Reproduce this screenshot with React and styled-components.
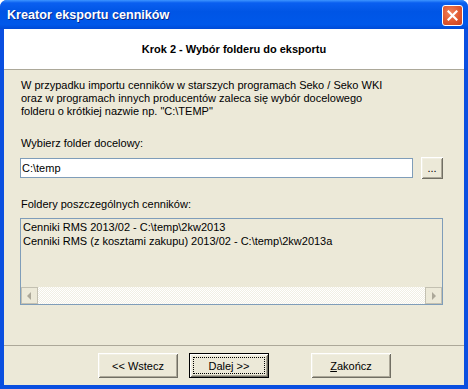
import React from 'react';
import styled, { createGlobalStyle } from 'styled-components';

const Global = createGlobalStyle`
  body {
    margin: 0;
    background: #ffffff;
  }
  #root {
    width: 468px;
    height: 389px;
  }
`;

const Window = styled.div`
  width: 468px;
  height: 389px;
  display: flex;
  flex-direction: column;
  background: #0a4fe0;
  border-radius: 7px 7px 0 0;
  overflow: hidden;
  font-family: Tahoma, "Liberation Sans", "DejaVu Sans", sans-serif;
  font-size: 11px;
  color: #000;
`;

const TitleBar = styled.div`
  height: 29px;
  flex: none;
  display: flex;
  align-items: center;
  justify-content: space-between;
  padding: 0 5px 0 7px;
  background: linear-gradient(
    180deg,
    #3d95ff 0%,
    #0a5ff0 10%,
    #0055e5 40%,
    #0058ea 85%,
    #004ad6 100%
  );
`;

const Title = styled.span`
  color: #ffffff;
  font-family: "Liberation Sans", Arial, sans-serif;
  font-weight: bold;
  font-size: 12.6px;
  text-shadow: 1px 1px 0 #0a2a8a;
  margin-top: 1px;
`;

const CloseButton = styled.div`
  width: 21px;
  height: 21px;
  box-sizing: border-box;
  border: 1px solid #ffffff;
  border-radius: 3px;
  background: radial-gradient(circle at 40% 35%, #f0835d 0%, #e0582f 55%, #c9401f 100%);
  display: flex;
  align-items: center;
  justify-content: center;
  margin-top: 1px;
`;

const Client = styled.div`
  flex: 1;
  margin: 0 4px 4px;
  background: #ece9d8;
  display: flex;
  flex-direction: column;
`;

const Header = styled.div`
  height: 40px;
  flex: none;
  background: #ffffff;
  border-bottom: 1px solid #aca899;
  display: flex;
  align-items: center;
  justify-content: center;
`;

const Heading = styled.h1`
  margin: 0;
  font-family: "Liberation Sans", Arial, sans-serif;
  font-size: 11px;
  font-weight: bold;
`;

const Body = styled.div`
  flex: 1;
  display: flex;
  flex-direction: column;
  padding: 8px 21px 0 16px;
`;

const Text = styled.p`
  margin: ${p => p.$top || 0}px 0 0 1px;
  line-height: 13px;
  font-family: "Liberation Sans", Arial, sans-serif;
  font-size: 11px;
  white-space: pre-line;
`;

const FolderRow = styled.div`
  display: flex;
  align-items: center;
  gap: 8px;
  margin-top: 7px;
`;

const TextInput = styled.div`
  flex: 1;
  height: 20px;
  box-sizing: border-box;
  border: 1px solid #7f9db9;
  background: #ffffff;
  display: flex;
  align-items: center;
  padding-left: 1px;
  font-family: "Liberation Sans", Arial, sans-serif;
  font-size: 11px;
`;

const ClassicButton = styled.div`
  box-sizing: border-box;
  width: ${p => p.$w}px;
  height: ${p => p.$h}px;
  background: #ece9d8;
  display: flex;
  align-items: center;
  justify-content: center;
  font-family: "Liberation Sans", Arial, sans-serif;
  font-size: 11px;
  position: relative;
  box-shadow: inset 1px 1px 0 #ffffff, inset -1px -1px 0 #716f64,
    inset 2px 2px 0 #f1efe2, inset -2px -2px 0 #aca899;
  ${p => p.$default && `border: 1px solid #000000;`}
`;

const Focus = styled.span`
  position: absolute;
  inset: 3px;
  border: 1px dotted #000000;
`;

const ListBox = styled.div`
  margin-top: 7px;
  height: 87px;
  box-sizing: border-box;
  border: 1px solid #7f9db9;
  display: flex;
  flex-direction: column;
`;

const ListItems = styled.div`
  flex: 1;
  padding: 1px 0 0 2px;
  font-family: "Liberation Sans", Arial, sans-serif;
  font-size: 11px;
  line-height: 14px;
`;

const ScrollBar = styled.div`
  height: 17px;
  flex: none;
  display: flex;
  justify-content: space-between;
  background-color: #fbfbf8;
  background-image: repeating-conic-gradient(#f1efe4 0 25%, #ffffff 0 50%);
  background-size: 2px 2px;
`;

const ArrowButton = styled.div`
  width: 17px;
  height: 17px;
  box-sizing: border-box;
  border: 1px solid #c3c0b1;
  background: #ece9d8;
  display: flex;
  align-items: center;
  justify-content: center;
`;

const Footer = styled.div`
  height: 40px;
  flex: none;
  box-sizing: border-box;
  border-top: 1px solid #aca899;
  display: flex;
  align-items: flex-start;
  padding: 7px 0 0 94px;
  gap: 11px;
`;

const Spacer = styled.div`
  width: 20px;
`;

const Arrow = ({ dir }) => (
  <svg width="5" height="8" viewBox="0 0 5 8">
    {dir === 'left' ? (
      <polygon points="4,0 4,8 0,4" fill="#aca899" />
    ) : (
      <polygon points="1,0 1,8 5,4" fill="#aca899" />
    )}
  </svg>
);

export default function App() {
  return (
    <>
      <Global />
      <Window>
        <TitleBar>
          <Title>Kreator eksportu cenników</Title>
          <CloseButton>
            <svg width="11" height="11" viewBox="0 0 11 11">
              <path d="M1.5 1.5 L9.5 9.5 M9.5 1.5 L1.5 9.5" stroke="#ffffff" strokeWidth="2.2" strokeLinecap="square" />
            </svg>
          </CloseButton>
        </TitleBar>
        <Client>
          <Header>
            <Heading>Krok 2 - Wybór folderu do eksportu</Heading>
          </Header>
          <Body>
            <Text $top={1}>
              {'W przypadku importu cenników w starszych programach Seko / Seko WKI\noraz w programach innych producentów zaleca się wybór docelowego\nfolderu o krótkiej nazwie np. "C:\\TEMP"'}
            </Text>
            <Text $top={19}>Wybierz folder docelowy:</Text>
            <FolderRow>
              <TextInput>C:\temp</TextInput>
              <ClassicButton $w={22} $h={22}>...</ClassicButton>
            </FolderRow>
            <Text $top={19}>Foldery poszczególnych cenników:</Text>
            <ListBox>
              <ListItems>
                <div>Cenniki RMS 2013/02 - C:\temp\2kw2013</div>
                <div>Cenniki RMS (z kosztami zakupu) 2013/02 - C:\temp\2kw2013a</div>
              </ListItems>
              <ScrollBar>
                <ArrowButton><Arrow dir="left" /></ArrowButton>
                <ArrowButton><Arrow dir="right" /></ArrowButton>
              </ScrollBar>
            </ListBox>
          </Body>
          <Footer>
            <ClassicButton $w={80} $h={25}>&lt;&lt; Wstecz</ClassicButton>
            <ClassicButton $w={80} $h={25} $default>
              <Focus />
              Dalej &gt;&gt;
            </ClassicButton>
            <Spacer />
            <ClassicButton $w={80} $h={25}>
              <span><u>Z</u>akończ</span>
            </ClassicButton>
          </Footer>
        </Client>
      </Window>
    </>
  );
}
